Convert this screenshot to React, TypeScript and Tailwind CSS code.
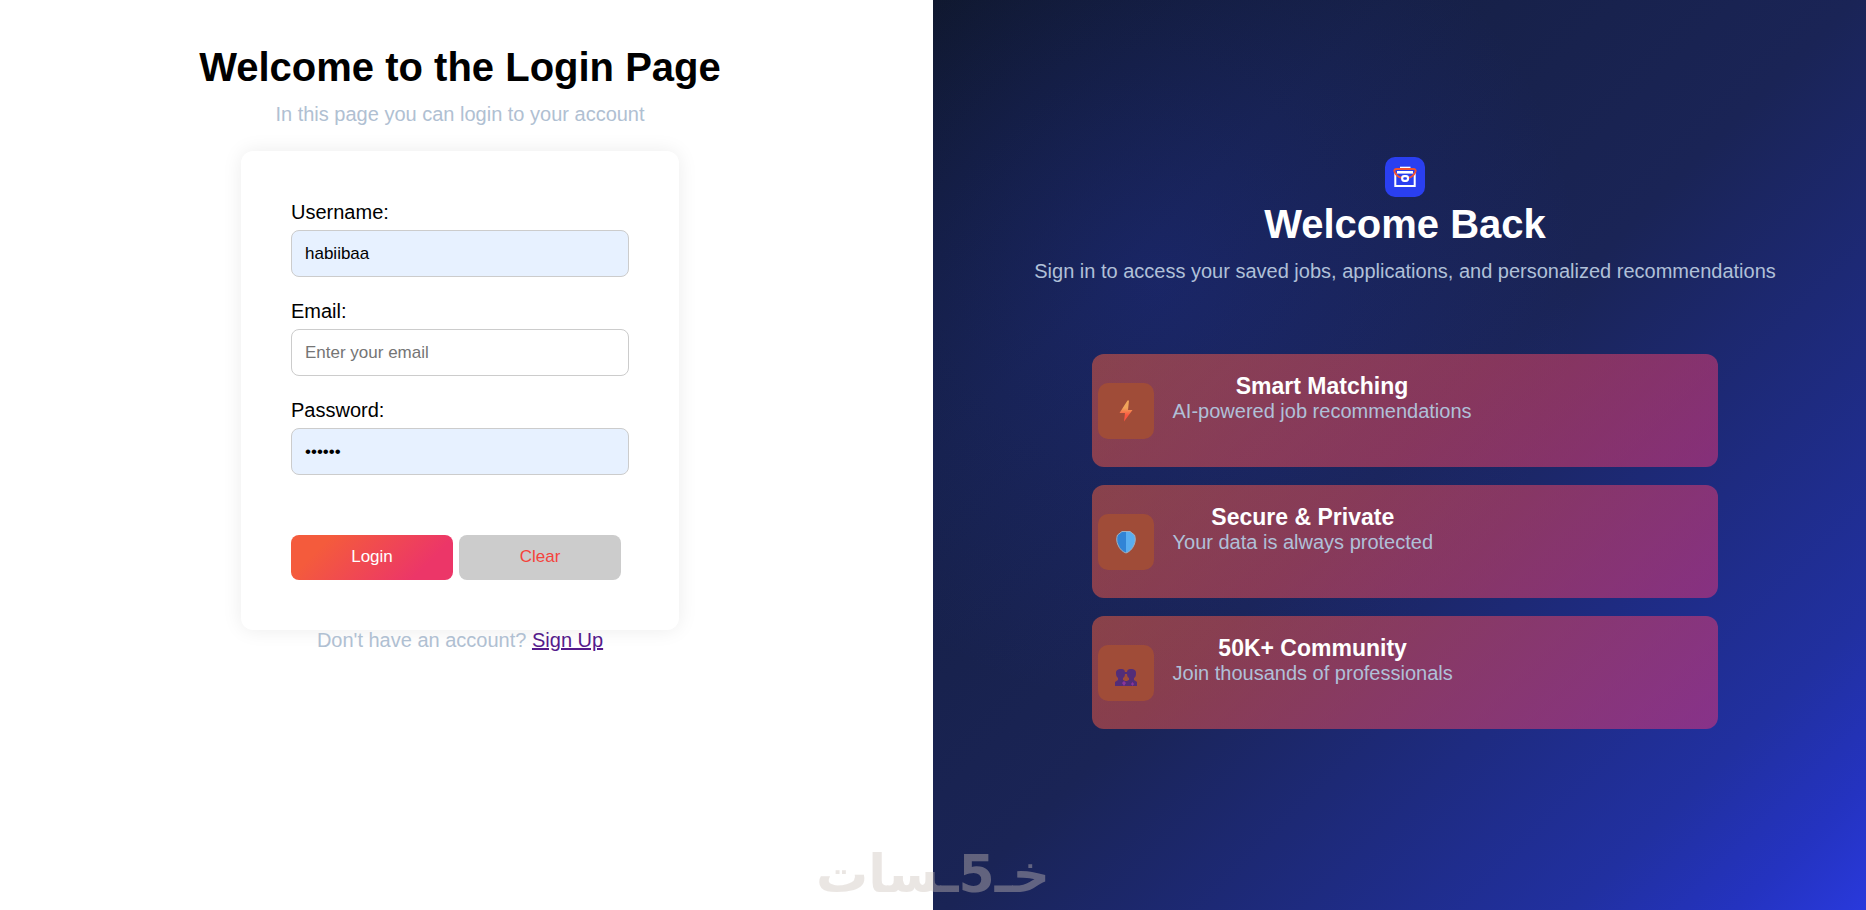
import React from 'react';

interface FieldProps {
  id: string;
  label: string;
  type: string;
  placeholder: string;
  value?: string;
}

const Field: React.FC<FieldProps> = ({ id, label, type, placeholder, value = '' }) => (
  <div className="flex flex-col">
    <label htmlFor={id} className="text-xl leading-[22px] text-black">
      {label}
    </label>
    <input
      id={id}
      name={id}
      type={type}
      placeholder={placeholder}
      defaultValue={value}
      autoComplete="off"
      className={`mt-[7px] h-[47px] w-full rounded-lg border border-[#ccc] px-[13px] text-[17px] text-black outline-none placeholder:text-[#757575] ${
        value ? 'bg-[#e7f1ff]' : 'bg-white'
      }`}
    />
  </div>
);

const BriefcaseIcon = () => (
  <svg width="24" height="24" viewBox="0 0 24 24" fill="none" aria-hidden="true">
    <path d="M7 2.500h10.500" stroke="#fff" strokeWidth="1.600" />
    <path d="M2.300 8v13h19.400V8" stroke="#fff" strokeWidth="2" />
    <path d="M4 7.300h16" stroke="#fff" strokeWidth="2.600" />
    <path
      d="M8.500 12.800C5 12 2.500 9.500 1.500 6.500 1 4.700 2 4 3.500 4h17c1.500 0 2.500.7 2 2.500-1 3-3.500 5.500-7 6.300"
      stroke="#f4512f"
      strokeWidth="2"
    />
    <rect x="9.200" y="11.200" width="5.800" height="4.600" rx="2" fill="#2a3ff0" stroke="#fff" strokeWidth="2.200" />
  </svg>
);

const BoltIcon = () => (
  <svg width="24" height="24" viewBox="0 0 24 24" aria-hidden="true">
    <defs>
      <linearGradient id="bolt" x1="0" y1="0" x2="0" y2="1">
        <stop offset="0.35" stopColor="#f0a45a" />
        <stop offset="0.7" stopColor="#fb5540" />
      </linearGradient>
    </defs>
    <path d="M13.500 1.500 5.500 14H11l-1 8.500L18.500 11H14l1-9.500Z" fill="url(#bolt)" />
  </svg>
);

const ShieldIcon = () => (
  <svg width="24" height="24" viewBox="0 0 24 24" aria-hidden="true">
    <path d="M12 1.500H8L3.500 5c-1.200 3-1 7 .5 10 1.500 4 5 7 8 8Z" fill="#3184d6" />
    <path d="M12 1.500h4L20.500 5c1.200 3 1 7-.5 10-1.500 4-5 7-8 8Z" fill="#5aaef0" />
    <path
      d="M8 1.500h8L20.500 5c1.200 3 1 7-.5 10-1.500 4-5 7-8 8-3-1-6.500-4-8-8-1.500-3-1.700-7-.5-10Z"
      fill="none"
      stroke="#9fb0c0"
    />
  </svg>
);

const PeopleIcon = () => (
  <svg width="24" height="32" viewBox="0 0 24 32" fill="#532d78" aria-hidden="true">
    <path d="M2 16c0-3 2-4 5-4s4 1 4 4-.5 4-2 5v2c2 .5 3 2 3 6H1v-4l3-2v-2c-1.500-1-2-3-2-5Z" />
    <path d="M13 16c0-3 1-4 4-4s5 1 5 4-.5 4-2 5v2l3 2v4H12c0-4 1-5.500 3-6v-2c-1.500-1-2-2-2-5Z" />
    <path d="M10 15h4v2h-4ZM9 24h6v5H9Z" />
    <path d="m8 26 2-2 2 2-2 3Z" fill="#8a359c" />
    <path d="m17 27 1.500-2 1.500 2-1.500 2Z" fill="#8a359c" />
  </svg>
);

const features = [
  { title: 'Smart Matching', text: 'AI-powered job recommendations', icon: <BoltIcon /> },
  { title: 'Secure & Private', text: 'Your data is always protected', icon: <ShieldIcon /> },
  { title: '50K+ Community', text: 'Join thousands of professionals', icon: <PeopleIcon /> },
];

const LoginForm = () => (
  <section className="flex flex-col items-center pt-[43px] pr-[13px]">
    <h1 className="text-[40px] leading-[48px] font-bold text-black">Welcome to the Login Page</h1>
    <p className="mt-[11px] text-xl leading-6 text-[#b0c0d2]">In this page you can login to your account</p>

    <form
      className="mt-[25px] w-full max-w-[438px] rounded-xl bg-white p-[50px] shadow-[0_0_20px_rgba(0,0,0,0.08)]"
      onSubmit={(e) => e.preventDefault()}
    >
      <div className="space-y-[23px]">
        <Field id="username" label="Username:" type="text" placeholder="Enter your username" value="habiibaa" />
        <Field id="email" label="Email:" type="email" placeholder="Enter your email" />
        <Field id="password" label="Password:" type="password" placeholder="Enter your password" value="123456" />
      </div>
      <div className="mt-[60px] flex gap-1.5 pr-2">
        <button
          type="submit"
          className="h-[45px] flex-1 rounded-lg bg-[linear-gradient(135deg,#f45b3c_20%,#ec3668_80%)] pb-0.5 text-[17px] text-white"
        >
          Login
        </button>
        <button type="reset" className="h-[45px] flex-1 rounded-lg bg-[#ccc] pb-0.5 text-[17px] text-[#f4433c]">
          Clear
        </button>
      </div>
    </form>

    <p className="text-xl leading-5 text-[#b0c0d2]">
      Don't have an account?{' '}
      <a href="#signup" className="text-[#551a8b] underline">
        Sign Up
      </a>
    </p>
  </section>
);

const WelcomePanel = () => (
  <section className="flex flex-col items-center bg-[radial-gradient(circle_at_24%_31%,rgba(42,63,240,0.18),transparent_45%),linear-gradient(135deg,#0f172a_0%,#162046_25%,#1a2456_50%,#2130a0_84%,#2433c0_93%,#2939dc_100%)] pt-[157px] pb-10 pl-[11px]">
    <div className="flex size-10 items-center justify-center rounded-[10px] bg-[#2a3ff0]">
      <BriefcaseIcon />
    </div>
    <h2 className="mt-[3px] text-[40px] leading-[48px] font-bold text-white">Welcome Back</h2>
    <p className="mt-[11px] text-xl leading-6 text-[#b0c0d8]">
      Sign in to access your saved jobs, applications, and personalized recommendations
    </p>

    <ul className="mt-[71px] w-[68%] space-y-[18px]">
      {features.map((feature) => (
        <li
          key={feature.title}
          className="flex h-[113px] items-center gap-[19px] rounded-xl bg-[linear-gradient(135deg,rgba(247,96,60,0.5),rgba(237,53,120,0.5))] px-1.5"
        >
          <div className="flex size-14 shrink-0 items-center justify-center rounded-[10px] bg-[#a04c38]">
            {feature.icon}
          </div>
          <div className="self-start pt-5 text-center">
            <h3 className="text-[23px] leading-[25px] font-bold text-white">{feature.title}</h3>
            <p className="text-xl leading-6 text-[#b0c0d8]">{feature.text}</p>
          </div>
        </li>
      ))}
    </ul>
  </section>
);

const App: React.FC = () => (
  <main className="relative grid min-h-screen grid-cols-2 bg-white font-['Liberation_Sans',Arial,sans-serif]">
    <LoginForm />
    <WelcomePanel />
    <div
      dir="rtl"
      className="pointer-events-none absolute inset-x-0 bottom-2.5 text-center font-['DejaVu_Sans',sans-serif] text-[52px] leading-[52px] font-bold text-[#cdc2ba] opacity-40"
    >
      خـ5ـسات
    </div>
  </main>
);

export default App;
